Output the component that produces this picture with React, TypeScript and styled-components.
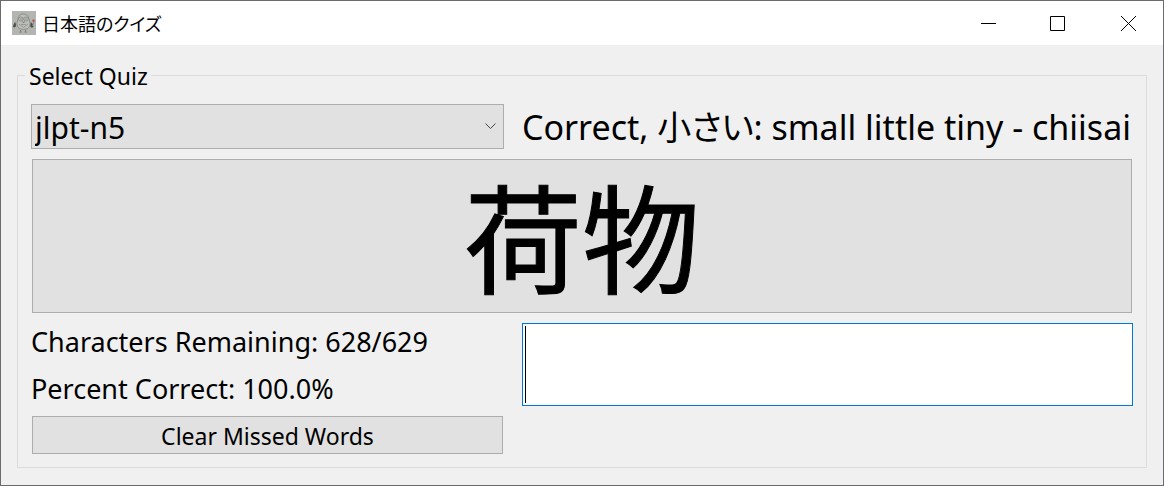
import React, { useState } from "react";
import styled, { createGlobalStyle, css } from "styled-components";

const GlobalStyle = createGlobalStyle`
  * { box-sizing: border-box; }
  body {
    margin: 0;
    background: #f0f0f0;
    color: #000;
    font-family: "Noto Sans", "Noto Sans CJK JP", sans-serif;
    font-feature-settings: "palt";
  }
  button, select, textarea { font: inherit; color: inherit; border-radius: 0; }
`;

const Window = styled.main`
  display: flex;
  flex-direction: column;
  min-height: 100vh;
  border: 1px solid #6b6a6c;
  background: #f0f0f0;
`;

const TitleBar = styled.header`
  display: flex;
  align-items: center;
  height: 44px;
  padding-left: 11px;
  background: #fff;
`;

const Title = styled.h1`
  flex: 1;
  margin: 0 0 0 6px;
  font-family: "Noto Sans CJK JP", sans-serif;
  font-size: 18px;
  font-weight: 400;
  line-height: 24px;
`;

const WindowButton = styled.button`
  display: flex;
  align-items: center;
  justify-content: center;
  width: 70px;
  height: 44px;
  padding: 0;
  border: 0;
  background: transparent;
`;

const Body = styled.form`
  display: flex;
  flex: 1;
  padding: 16px 16px 17px;
`;

const Group = styled.fieldset`
  flex: 1;
  min-width: 0;
  margin: 0;
  padding: 14px 13px 13px;
  border: 1px solid #dcdcdc;
`;

const Legend = styled.legend`
  margin-left: -6px;
  padding: 1px 3px 0 4px;
  font-size: 23px;
  line-height: 28px;
`;

const Grid = styled.div`
  display: grid;
  grid-template-columns: minmax(0, 473fr) minmax(0, 611fr);
  gap: 10px 18px;
`;

const Picker = styled.div`
  position: relative;
  height: 45px;
`;

const QuizSelect = styled.select`
  width: 100%;
  height: 100%;
  padding: 2px 3px 0;
  appearance: none;
  border: 1px solid #adadad;
  background: #e1e1e1;
  font-size: 30px;
  outline: 0;
`;

const Chevron = styled.svg`
  position: absolute;
  top: 19px;
  right: 8px;
  pointer-events: none;
`;

const Feedback = styled.output`
  padding-top: 2px;
  font-size: 34px;
  line-height: 43px;
  white-space: nowrap;
`;

const face = css`
  margin: 0 1px;
  border: 1px solid #adadad;
  background: #e1e1e1;
`;

const WordButton = styled.button`
  ${face}
  grid-column: 1 / -1;
  height: 154px;
  padding: 0 0 4px;
  font-family: "Noto Sans CJK JP", sans-serif;
  font-size: 118px;
  font-feature-settings: normal;
  line-height: 148px;
  -webkit-text-stroke: 1px #000;
`;

const ClearButton = styled.button`
  ${face}
  height: 38px;
  padding: 2px 0 0;
  font-size: 23px;
  line-height: 34px;
`;

const Stat = styled.p`
  margin: 0;
  padding-top: 2px;
  font-size: 27px;
  line-height: 34px;
`;

const AnswerBox = styled.div`
  position: relative;
  grid-column: 2;
  grid-row: 3 / span 2;
  height: 83px;
`;

const Answer = styled.textarea`
  display: block;
  width: 100%;
  height: 100%;
  padding: 2px 4px;
  border: 1px solid #0078d7;
  background: #fff;
  font-size: 56px;
  line-height: 77px;
  caret-color: transparent;
  outline: 0;
  resize: none;
  overflow: hidden;
`;

const Caret = styled.span`
  position: absolute;
  top: 3px;
  bottom: 3px;
  left: 3px;
  width: 1px;
  background: #000;
`;

function OwlIcon() {
  return (
    <svg width="24" height="24" viewBox="0 0 24 24" fill="none" aria-hidden="true">
      <rect width="24" height="24" fill="#b3b5b1" />
      <path d="M3.500 11 Q1.500 12 1 15.500 Q2.500 17.500 4 15Z M18.500 11 Q21 12 21.500 15.500 Q20 18 18 15Z" fill="#4d4d4d" />
      <path d="M6 8 Q6.500 3 11 3 Q16 3 17 8 Q21 18 11.500 18.500 Q2 18 6 8Z" fill="#bcbeba" stroke="#8b8d8a" />
      <ellipse cx="8.800" cy="8" rx="2.300" ry="2" stroke="#8f918e" />
      <ellipse cx="14" cy="8" rx="2.300" ry="2" stroke="#8f918e" />
      <path d="M8.500 8H9.500M13.500 8H14.500M10.500 10.500 L11.500 12 L12.500 10.500" stroke="#6f716e" />
      <path d="M7 13 L11.500 16.500 L16 13 M9 13.500 H14" stroke="#989a97" />
      <path d="M8.500 19 V21.500 M13.500 19 V21.500 M7.500 21 H10 M12.500 21 H15" stroke="#838582" />
      <path d="M22 11 L20.500 15" stroke="#858784" />
      <path d="M20 9 L22 8 L23 10 L21 11.500Z" fill="#a9898a" />
      <circle cx="21.500" cy="9.800" r="1" fill="#c04a50" />
    </svg>
  );
}

export default function App() {
  const [answer, setAnswer] = useState("");
  return (
    <>
      <GlobalStyle />
      <Window>
        <TitleBar>
          <OwlIcon />
          <Title>日本語のクイズ</Title>
          <WindowButton type="button" aria-label="Minimize">
            <svg width="16" height="15" stroke="#000"><path d="M1 7.500H16" /></svg>
          </WindowButton>
          <WindowButton type="button" aria-label="Maximize">
            <svg width="16" height="15" stroke="#000" fill="none"><path d="M.5.5h14v14h-14z" /></svg>
          </WindowButton>
          <WindowButton type="button" aria-label="Close">
            <svg width="16" height="15" stroke="#000"><path d="M1 0L16 15M16 0L1 15" /></svg>
          </WindowButton>
        </TitleBar>
        <Body onSubmit={(e) => e.preventDefault()}>
          <Group>
            <Legend>Select Quiz</Legend>
            <Grid>
              <Picker>
                <QuizSelect aria-label="Quiz" defaultValue="jlpt-n5">
                  <option>jlpt-n5</option>
                </QuizSelect>
                <Chevron width="11" height="7" fill="none" stroke="#444">
                  <path d="M.5.5L5.500 5.500L10.500.5" />
                </Chevron>
              </Picker>
              <Feedback>Correct, 小さい: small little tiny - chiisai</Feedback>
              <WordButton type="button">荷物</WordButton>
              <Stat>Characters Remaining: 628/629</Stat>
              <Stat>Percent Correct: 100.0%</Stat>
              <AnswerBox>
                <Answer aria-label="Answer" value={answer} onChange={(e) => setAnswer(e.target.value)} />
                {answer === "" && <Caret />}
              </AnswerBox>
              <ClearButton type="button">Clear Missed Words</ClearButton>
            </Grid>
          </Group>
        </Body>
      </Window>
    </>
  );
}
